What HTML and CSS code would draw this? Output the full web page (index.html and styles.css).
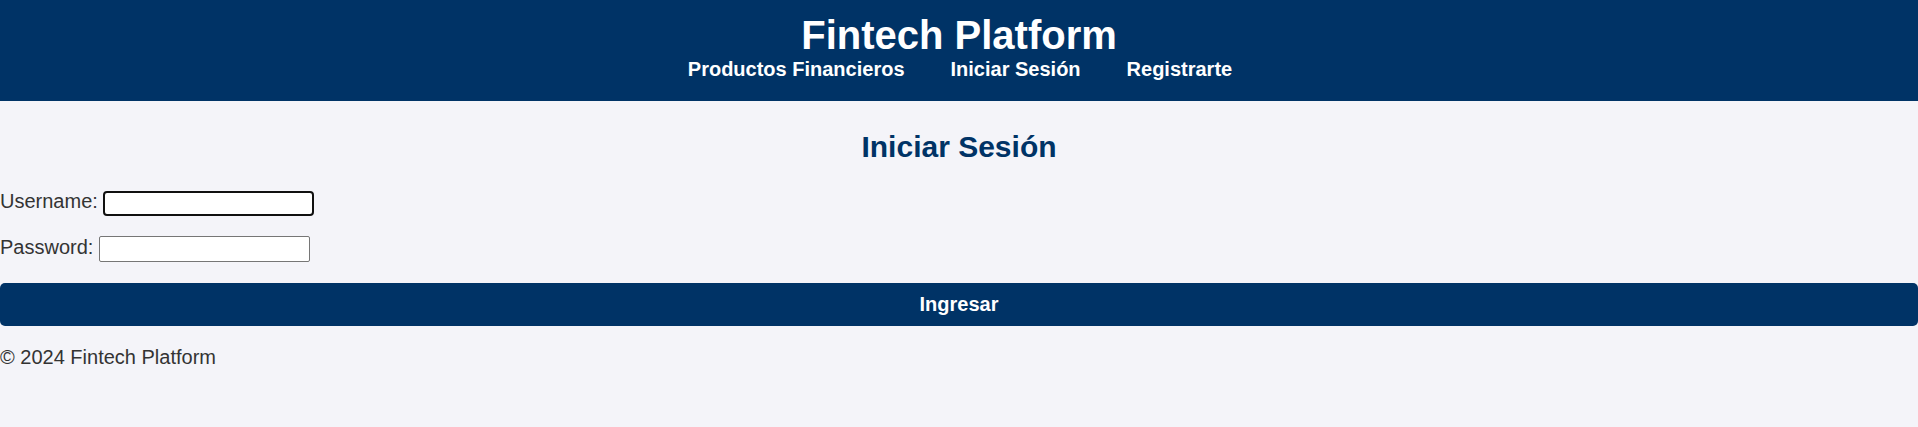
FILE: index.html
```html
<!DOCTYPE html>
<html lang="es">
<head>
<meta charset="utf-8">
<title>Fintech Platform</title>
<link rel="stylesheet" href="styles.css">
</head>
<body>
<header class="site-header">
  <h1 class="site-title">Fintech Platform</h1>
  <nav class="site-nav">
    <a class="nav-link" href="#">Productos Financieros</a>
    <a class="nav-link" href="#">Iniciar Sesión</a>
    <a class="nav-link" href="#">Registrarte</a>
  </nav>
</header>
<main class="content">
  <h2 class="page-title">Iniciar Sesión</h2>
  <form class="login-form">
    <div class="field"><label class="field-label" for="username">Username:</label> <input class="field-input is-focused" type="text" id="username"></div>
    <div class="field"><label class="field-label" for="password">Password:</label> <input class="field-input" type="password" id="password"></div>
    <button class="submit-btn" type="button">Ingresar</button>
  </form>
</main>
<footer class="site-footer">
  <p class="copyright">© 2024 Fintech Platform</p>
</footer>
</body>
</html>
```
FILE: styles.css
```css
html, body {
  margin: 0;
  padding: 0;
}
body {
  background: #f4f4f9;
  color: #333;
  font-family: "Liberation Sans", Arial, sans-serif;
  font-size: 20px;
  min-height: 427px;
}
.site-header {
  background: #003366;
  color: #fff;
  text-align: center;
  padding: 12px 0 20px;
}
.site-title {
  margin: 0;
  font-size: 40px;
  font-weight: bold;
  line-height: 46px;
}
.site-nav {
  display: flex;
  justify-content: center;
  gap: 46px;
  padding-left: 2px;
  line-height: 23px;
}
.nav-link {
  color: #fff;
  text-decoration: none;
  font-weight: bold;
  font-size: 20px;
}
.content {
  padding: 0;
}
.page-title {
  margin: 28px 0 26px;
  text-align: center;
  color: #003366;
  font-size: 30px;
  line-height: 35px;
}
.login-form {
  display: flex;
  flex-direction: column;
}
.field {
  display: flex;
  align-items: center;
  height: 26px;
  margin-bottom: 20px;
  white-space: pre;
}
.field-label {
  color: #333;
  margin-bottom: 3px;
}
.field-input {
  box-sizing: border-box;
  width: 211px;
  height: 26px;
  margin: 0 0 0 6px;
  border: 1px solid #767676;
  border-radius: 2px;
  background: #fff;
  padding: 1px 2px;
  font-size: 16px;
}
.field-input.is-focused {
  border: 2px solid #101010;
  border-radius: 4px;
  height: 25px;
  margin-left: 5px;
  outline: none;
}
.submit-btn {
  box-sizing: border-box;
  width: 100%;
  height: 43px;
  margin-top: 1px;
  border: none;
  border-radius: 5px;
  background: #003366;
  color: #fff;
  font-family: "Liberation Sans", Arial, sans-serif;
  font-size: 20px;
  font-weight: bold;
}
.site-footer {
  margin: 0;
}
.copyright {
  margin: 20px 0 0;
  line-height: 23px;
}
```
